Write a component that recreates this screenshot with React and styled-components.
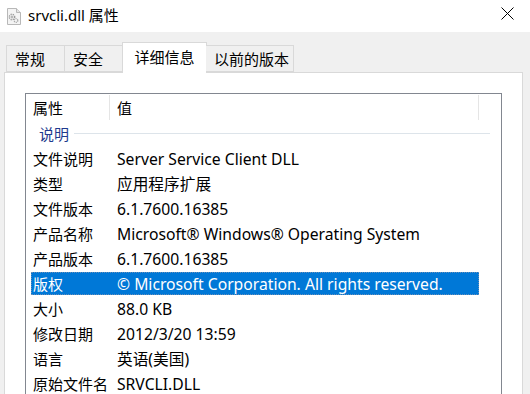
import React from "react";
import styled, { createGlobalStyle } from "styled-components";

const Global = createGlobalStyle`
  html, body {
    margin: 0;
    padding: 0;
    background: #f0f0f0;
    overflow: hidden;
  }
  body {
    font-family: "Noto Sans", "Noto Sans CJK SC", sans-serif;
    font-size: 15px;
    color: #000;
  }
`;

const Window = styled.div`
  width: 530px;
  height: 394px;
  overflow: hidden;
  background: #f0f0f0;
`;

const TitleBar = styled.div`
  height: 32px;
  background: #fff;
  display: flex;
  align-items: center;
  padding-left: 6px;
  box-sizing: border-box;
`;

const Title = styled.span`
  margin-left: 6px;
  font-size: 15px;
  flex: 1;
  margin-top: -4px;
`;

const Close = styled.div`
  width: 46px;
  display: flex;
  justify-content: center;
  margin-top: -6px;
`;

const Body = styled.div`
  padding: 10px 0 0 4px;
`;

const TabStrip = styled.div`
  display: flex;
  align-items: flex-end;
  height: 30px;
  padding-left: 2px;
  position: relative;
  z-index: 1;
`;

const Tab = styled.div`
  height: ${(p) => (p.$active ? "31px" : "27px")};
  margin-left: ${(p) => (p.$active ? "-1px" : "0")};
  margin-right: ${(p) => (p.$active ? "-1px" : "0")};
  padding: 0 ${(p) => (p.$active ? "10px" : "6px")};
  width: ${(p) => p.$w}px;
  box-sizing: border-box;
  border: 1px solid #d9d9d9;
  border-bottom: ${(p) => (p.$active ? "none" : "1px solid #d9d9d9")};
  border-left: ${(p) => (p.$first || p.$active ? "1px solid #d9d9d9" : "none")};
  background: ${(p) => (p.$active ? "#fff" : "#f0f0f0")};
  display: flex;
  align-items: center;
  justify-content: ${(p) => (p.$active ? "center" : "flex-start")};
  padding-left: ${(p) => (p.$active ? "10px" : "8px")};
  white-space: nowrap;
  font-family: "Noto Sans CJK SC", sans-serif;
  font-size: 15px;
  padding-bottom: ${(p) => (p.$active ? "4px" : "0")};
  margin-bottom: ${(p) => (p.$active ? "-1px" : "0")};
`;

const Panel = styled.div`
  width: 519px;
  height: 340px;
  box-sizing: border-box;
  background: #fff;
  border: 1px solid #d9d9d9;
  padding: 20px 0 0 20px;
`;

const ListBox = styled.div`
  width: 477px;
  height: 330px;
  box-sizing: border-box;
  border: 1px solid #828790;
  border-bottom: none;
  background: #fff;
`;

const Header = styled.div`
  display: flex;
  height: 27px;
  align-items: center;
`;

const HeadCell = styled.div`
  width: ${(p) => p.$w}px;
  height: 25px;
  box-sizing: border-box;
  padding-left: 7px;
  border-right: 1px solid #e5e5e5;
  display: flex;
  align-items: center;
  font-family: "Noto Sans CJK SC", sans-serif;
  margin-top: -1px;
`;

const Group = styled.div`
  display: flex;
  align-items: center;
  height: 25px;
  padding-left: 13px;
  padding-right: 11px;
  color: #1e3a8e;
  font-family: "Noto Sans CJK SC", sans-serif;
`;

const GroupLine = styled.div`
  flex: 1;
  height: 1px;
  margin-left: 5px;
  background: #dde4ea;
`;

const Row = styled.div`
  display: flex;
  align-items: center;
  height: 25px;
  padding: 1px 0 1px 5px;
  box-sizing: border-box;
`;

const RowInner = styled.div`
  display: flex;
  align-items: center;
  width: 448px;
  height: 23px;
  box-sizing: border-box;
  background: ${(p) => (p.$selected ? "#0078d7" : "transparent")};
  color: ${(p) => (p.$selected ? "#fff" : "#000")};
  outline: ${(p) => (p.$selected ? "1px dotted #6a8fb8" : "none")};
  outline-offset: -1px;
`;

const Label = styled.span`
  width: 86px;
  padding-left: 2px;
  box-sizing: border-box;
  white-space: nowrap;
  font-family: "Noto Sans CJK SC", sans-serif;
`;

const Value = styled.span`
  white-space: nowrap;
  font-size: 15.7px;
  font-family: "Noto Sans", "Noto Sans CJK SC", sans-serif;
`;

const FileIcon = () => (
  <svg width="16" height="17" viewBox="0 0 16 17">
    <path d="M1.5 0.5h9l4 4v12h-13z" fill="#f4f4f4" stroke="#b8b8b8" />
    <path d="M10.5 0.5v4h4" fill="#e4e4e4" stroke="#b8b8b8" />
    <circle cx="6" cy="9" r="2.6" fill="none" stroke="#9a9a9a" strokeWidth="1.6" strokeDasharray="1.2 0.9" />
    <circle cx="6" cy="9" r="0.9" fill="#9a9a9a" />
    <circle cx="10" cy="12.5" r="1.8" fill="none" stroke="#a8a8a8" strokeWidth="1.3" strokeDasharray="1 0.8" />
  </svg>
);

const CloseIcon = () => (
  <svg width="13" height="13" viewBox="0 0 13 13">
    <path d="M0.5 0.5l12 12M12.5 0.5l-12 12" stroke="#000" strokeWidth="1" />
  </svg>
);

const rows = [
  ["文件说明", "Server Service Client DLL"],
  ["类型", "应用程序扩展"],
  ["文件版本", "6.1.7600.16385"],
  ["产品名称", "Microsoft® Windows® Operating System"],
  ["产品版本", "6.1.7600.16385"],
  ["版权", "© Microsoft Corporation. All rights reserved.", true],
  ["大小", "88.0 KB"],
  ["修改日期", "2012/3/20 13:59"],
  ["语言", "英语(美国)"],
  ["原始文件名", "SRVCLI.DLL"],
];

export default function App() {
  return (
    <Window>
      <Global />
      <TitleBar>
        <FileIcon />
        <Title>srvcli.dll 属性</Title>
        <Close>
          <CloseIcon />
        </Close>
      </TitleBar>
      <Body>
        <TabStrip>
          <Tab $first $w={59}>常规</Tab>
          <Tab $w={58}>安全</Tab>
          <Tab $active $w={85}>详细信息</Tab>
          <Tab $w={88}>以前的版本</Tab>
        </TabStrip>
        <Panel>
          <ListBox>
            <Header>
              <HeadCell $w={84}>属性</HeadCell>
              <HeadCell $w={369}>值</HeadCell>
            </Header>
            <Group>
              说明
              <GroupLine />
            </Group>
            {rows.map(([k, v, sel]) => (
              <Row key={k}>
                <RowInner $selected={sel}>
                  <Label>{k}</Label>
                  <Value>{v}</Value>
                </RowInner>
              </Row>
            ))}
          </ListBox>
        </Panel>
      </Body>
    </Window>
  );
}
